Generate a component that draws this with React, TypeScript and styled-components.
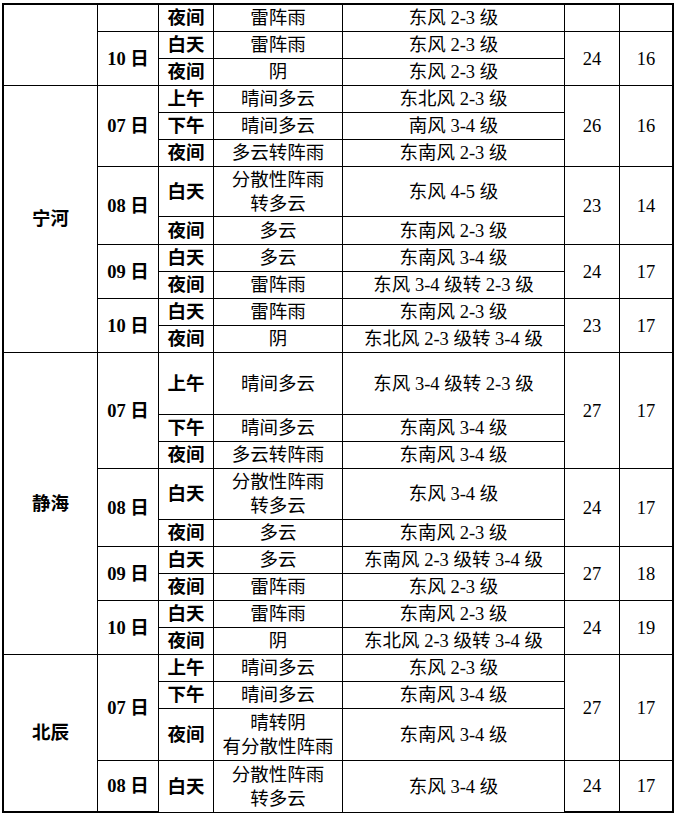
import React from 'react'
import styled, { createGlobalStyle } from 'styled-components'

type Span = { text: string; span: number }
type Temps = { hi: string; lo: string; span: number }

type Line = {
  h: number
  region?: Span
  date?: Span
  period: string
  weather: string[]
  wind: string
  temps?: Temps
}

const lines: Line[] = [
  { h: 27, region: { text: '', span: 3 }, date: { text: '', span: 1 }, period: '夜间', weather: ['雷阵雨'], wind: '东风 2-3 级', temps: { hi: '', lo: '', span: 1 } },
  { h: 27, date: { text: '10 日', span: 2 }, period: '白天', weather: ['雷阵雨'], wind: '东风 2-3 级', temps: { hi: '24', lo: '16', span: 2 } },
  { h: 27, period: '夜间', weather: ['阴'], wind: '东风 2-3 级' },

  { h: 27, region: { text: '宁河', span: 9 }, date: { text: '07 日', span: 3 }, period: '上午', weather: ['晴间多云'], wind: '东北风 2-3 级', temps: { hi: '26', lo: '16', span: 3 } },
  { h: 27, period: '下午', weather: ['晴间多云'], wind: '南风 3-4 级' },
  { h: 27, period: '夜间', weather: ['多云转阵雨'], wind: '东南风 2-3 级' },
  { h: 50, date: { text: '08 日', span: 2 }, period: '白天', weather: ['分散性阵雨', '转多云'], wind: '东风 4-5 级', temps: { hi: '23', lo: '14', span: 2 } },
  { h: 28, period: '夜间', weather: ['多云'], wind: '东南风 2-3 级' },
  { h: 27, date: { text: '09 日', span: 2 }, period: '白天', weather: ['多云'], wind: '东南风 3-4 级', temps: { hi: '24', lo: '17', span: 2 } },
  { h: 27, period: '夜间', weather: ['雷阵雨'], wind: '东风 3-4 级转 2-3 级' },
  { h: 27, date: { text: '10 日', span: 2 }, period: '白天', weather: ['雷阵雨'], wind: '东南风 2-3 级', temps: { hi: '23', lo: '17', span: 2 } },
  { h: 27, period: '夜间', weather: ['阴'], wind: '东北风 2-3 级转 3-4 级' },

  { h: 62, region: { text: '静海', span: 9 }, date: { text: '07 日', span: 3 }, period: '上午', weather: ['晴间多云'], wind: '东风 3-4 级转 2-3 级', temps: { hi: '27', lo: '17', span: 3 } },
  { h: 27, period: '下午', weather: ['晴间多云'], wind: '东南风 3-4 级' },
  { h: 27, period: '夜间', weather: ['多云转阵雨'], wind: '东南风 3-4 级' },
  { h: 51, date: { text: '08 日', span: 2 }, period: '白天', weather: ['分散性阵雨', '转多云'], wind: '东风 3-4 级', temps: { hi: '24', lo: '17', span: 2 } },
  { h: 27, period: '夜间', weather: ['多云'], wind: '东南风 2-3 级' },
  { h: 27, date: { text: '09 日', span: 2 }, period: '白天', weather: ['多云'], wind: '东南风 2-3 级转 3-4 级', temps: { hi: '27', lo: '18', span: 2 } },
  { h: 27, period: '夜间', weather: ['雷阵雨'], wind: '东风 2-3 级' },
  { h: 27, date: { text: '10 日', span: 2 }, period: '白天', weather: ['雷阵雨'], wind: '东南风 2-3 级', temps: { hi: '24', lo: '19', span: 2 } },
  { h: 27, period: '夜间', weather: ['阴'], wind: '东北风 2-3 级转 3-4 级' },

  { h: 27, region: { text: '北辰', span: 4 }, date: { text: '07 日', span: 3 }, period: '上午', weather: ['晴间多云'], wind: '东风 2-3 级', temps: { hi: '27', lo: '17', span: 3 } },
  { h: 27, period: '下午', weather: ['晴间多云'], wind: '东南风 3-4 级' },
  { h: 52, period: '夜间', weather: ['晴转阴', '有分散性阵雨'], wind: '东南风 3-4 级' },
  { h: 52, date: { text: '08 日', span: 1 }, period: '白天', weather: ['分散性阵雨', '转多云'], wind: '东风 3-4 级', temps: { hi: '24', lo: '17', span: 1 } },
]

const colWidths = [94, 61, 55, 129, 222, 55, 54]

export default function App() {
  const lastIndex = lines.length - 1
  return (
    <>
      <GlobalStyle />
      <Table>
        <colgroup>
          {colWidths.map((w, i) => (
            <col key={i} width={w} />
          ))}
        </colgroup>
        <tbody>
          {lines.map((line, i) => {
            const isLast = i === lastIndex
            return (
              <Row key={i} $h={line.h}>
                {line.region && (
                  <Region rowSpan={line.region.span} $thick={i + line.region.span - 1 >= lastIndex}>
                    {line.region.text}
                  </Region>
                )}
                {line.date && (
                  <DateCell rowSpan={line.date.span} $thick={i + line.date.span - 1 >= lastIndex}>
                    {line.date.text}
                  </DateCell>
                )}
                <Period>{line.period}</Period>
                <Weather>
                  {line.weather.map((w, k) => (
                    <div key={k}>{w}</div>
                  ))}
                </Weather>
                <Wind>{line.wind}</Wind>
                {line.temps && (
                  <>
                    <Temp rowSpan={line.temps.span} $thick={isLast || i + line.temps.span - 1 >= lastIndex}>
                      {line.temps.hi}
                    </Temp>
                    <Temp rowSpan={line.temps.span} $thick={i + line.temps.span - 1 >= lastIndex} $edge>
                      {line.temps.lo}
                    </Temp>
                  </>
                )}
              </Row>
            )
          })}
        </tbody>
      </Table>
    </>
  )
}

const GlobalStyle = createGlobalStyle`
  body {
    margin: 0;
    background: #fff;
    color: #000;
    font-family: "Liberation Serif", "Noto Sans CJK SC", serif;
  }
`

const Table = styled.table`
  margin: 3px 0 0 2px;
  width: 672px;
  table-layout: fixed;
  border-collapse: separate;
  border-spacing: 0;
  border-top: 2px solid #000;
  border-left: 2px solid #000;
  font-size: 18.5px;
`

const Row = styled.tr<{ $h: number }>`
  height: ${p => p.$h}px;
`

const Cell = styled.td<{ $thick?: boolean; $edge?: boolean }>`
  padding: 0;
  box-sizing: border-box;
  border-right: ${p => (p.$edge ? 2 : 1)}px solid #000;
  border-bottom: ${p => (p.$thick ? 2 : 1)}px solid #000;
  text-align: center;
  vertical-align: middle;
  line-height: 24px;
  white-space: nowrap;
`

const Region = styled(Cell)`
  font-weight: 700;
`

const DateCell = styled(Cell)`
  font-weight: 700;
`

const Period = styled(Cell)`
  font-weight: 700;
`

const Weather = styled(Cell)`
  font-weight: 400;
`

const Wind = styled(Cell)`
  font-weight: 400;
`

const Temp = styled(Cell)`
  font-weight: 400;
`
